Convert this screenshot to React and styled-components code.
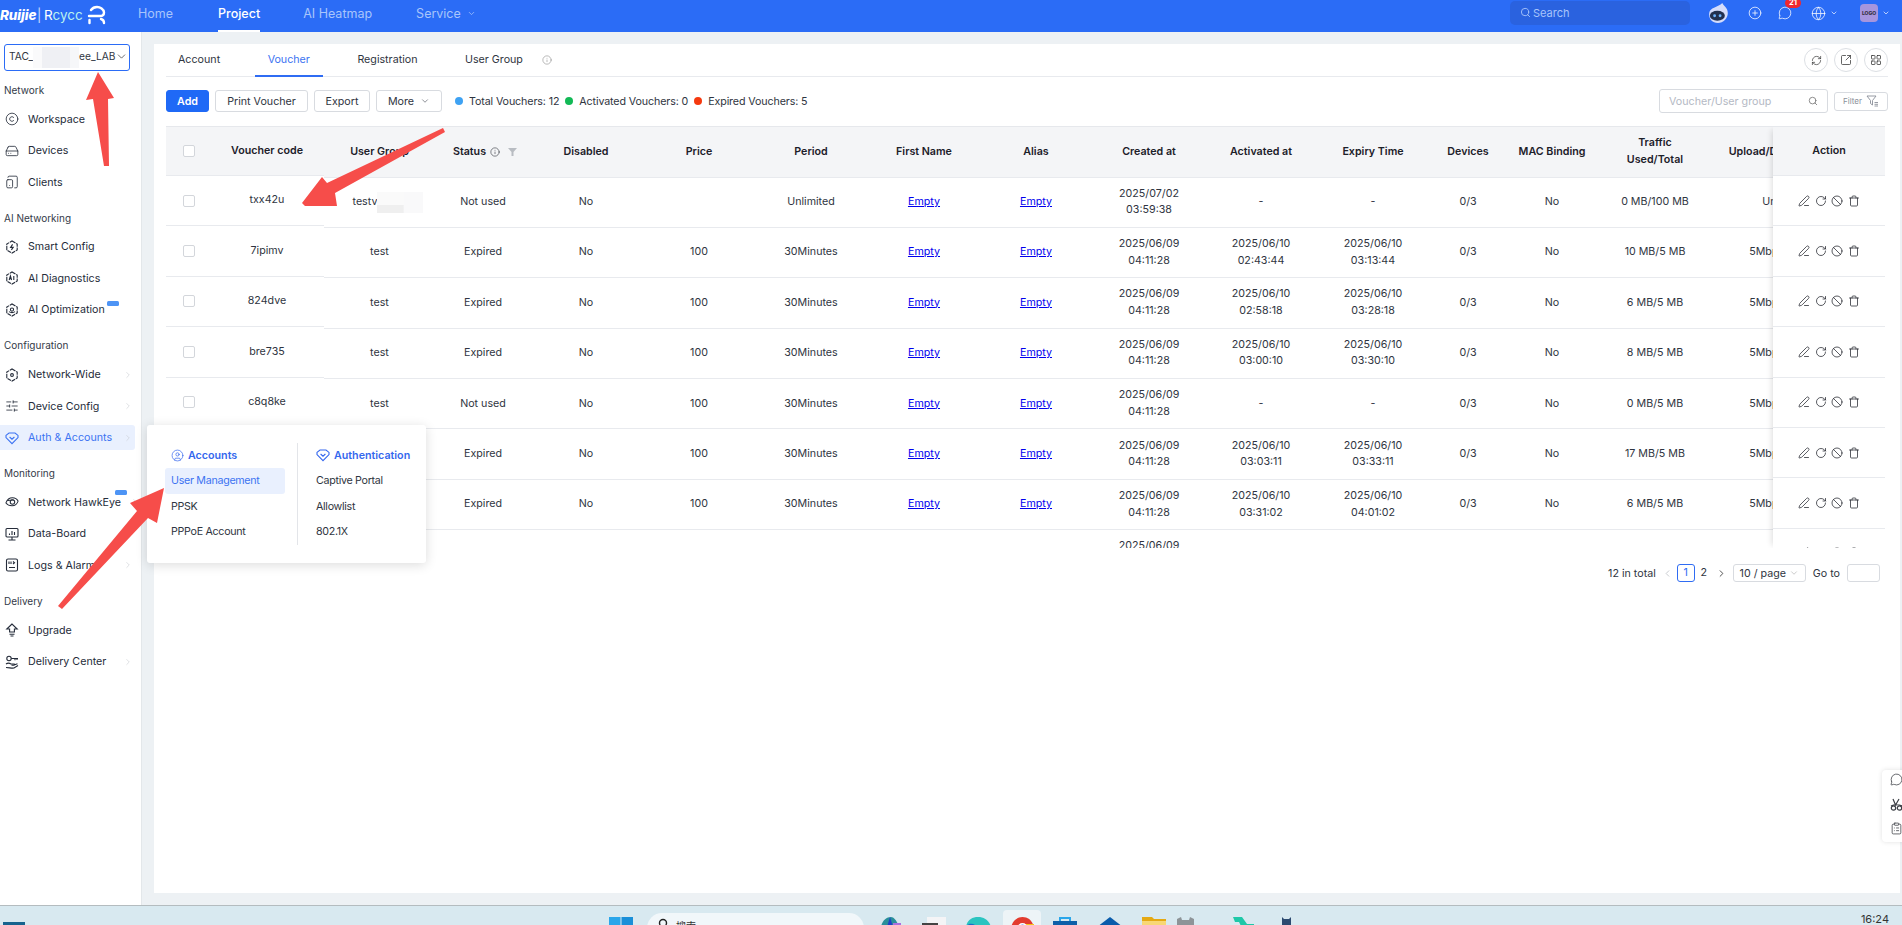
import React from "react";
import styled, { createGlobalStyle } from "styled-components";
import {
  Ban,
  ChevronDown,
  ChevronRight,
  ChevronLeft,
  CirclePlus,
  ClipboardList,
  Copyright,
  Globe,
  HardDrive,
  Info,
  LayoutGrid,
  MessageCircle,
  PenLine,
  RefreshCw,
  RotateCw,
  Search,
  SlidersHorizontal,
  SquareArrowOutUpRight,
  TabletSmartphone,
  Trash,
  CircleUser,
} from "lucide-react";

const blue = "#2b6cf6";
const text = "#2f3541";

const rows = [
  { code: "txx42u", group: "testv", status: "Not used", price: "", period: "Unlimited", created: ["2025/07/02", "03:59:38"], traffic: "0 MB/100 MB", rate: "Unlimited" },
  { code: "7ipimv", group: "test", status: "Expired", price: "100", period: "30Minutes", created: ["2025/06/09", "04:11:28"], activated: ["2025/06/10", "02:43:44"], expiry: ["2025/06/10", "03:13:44"], traffic: "10 MB/5 MB", rate: "5Mbps/5Mbps" },
  { code: "824dve", group: "test", status: "Expired", price: "100", period: "30Minutes", created: ["2025/06/09", "04:11:28"], activated: ["2025/06/10", "02:58:18"], expiry: ["2025/06/10", "03:28:18"], traffic: "6 MB/5 MB", rate: "5Mbps/5Mbps" },
  { code: "bre735", group: "test", status: "Expired", price: "100", period: "30Minutes", created: ["2025/06/09", "04:11:28"], activated: ["2025/06/10", "03:00:10"], expiry: ["2025/06/10", "03:30:10"], traffic: "8 MB/5 MB", rate: "5Mbps/5Mbps" },
  { code: "c8q8ke", group: "test", status: "Not used", price: "100", period: "30Minutes", created: ["2025/06/09", "04:11:28"], traffic: "0 MB/5 MB", rate: "5Mbps/5Mbps" },
  { code: "m3k9xa", group: "test", status: "Expired", price: "100", period: "30Minutes", created: ["2025/06/09", "04:11:28"], activated: ["2025/06/10", "03:03:11"], expiry: ["2025/06/10", "03:33:11"], traffic: "17 MB/5 MB", rate: "5Mbps/5Mbps" },
  { code: "p5t2hw", group: "test", status: "Expired", price: "100", period: "30Minutes", created: ["2025/06/09", "04:11:28"], activated: ["2025/06/10", "03:31:02"], expiry: ["2025/06/10", "04:01:02"], traffic: "6 MB/5 MB", rate: "5Mbps/5Mbps" },
  { code: "q7r4nc", group: "test", status: "Not used", price: "100", period: "30Minutes", created: ["2025/06/09", "04:11:28"], traffic: "0 MB/5 MB", rate: "5Mbps/5Mbps" },
];

const Hex = ({ children }) => (
  <svg width="14" height="14" viewBox="0 0 14 14" fill="none" stroke="currentColor" strokeWidth="1.1">
    <path d="M7 1l5.2 3v6L7 13l-5.2-3V4z" strokeDasharray="4 .8" />
    {children}
  </svg>
);

const HeartShield = () => (
  <svg width="14" height="14" viewBox="0 0 14 14" fill="none" stroke="currentColor" strokeWidth="1.1">
    <path d="M1 4.400L4 2h6l3 2.400V6.600L7 12.600 1 6.600z" />
    <path d="M4.600 6L7 8.200 9.400 6" />
  </svg>
);

const sideGroups = [
  {
    title: "Network",
    items: [
      { label: "Workspace", icon: <Copyright size={14} strokeWidth={1.4} /> },
      { label: "Devices", icon: <HardDrive size={14} strokeWidth={1.4} /> },
      { label: "Clients", icon: <TabletSmartphone size={14} strokeWidth={1.4} /> },
    ],
  },
  {
    title: "AI Networking",
    items: [
      { label: "Smart Config", icon: <Hex><path d="M7.600 4.400L5.600 7.400h2.600L6.400 9.800" /></Hex> },
      { label: "AI Diagnostics", icon: <Hex><path d="M4.200 9l1.200-4 1.200 4M4.700 7.800h1.500M8.800 5v4" /></Hex> },
      { label: "AI Optimization", icon: <Hex><circle cx="7" cy="6.600" r="1.600" /><path d="M4 8.600c2 1.400 4 1.400 6 0" /></Hex>, tag: { top: 3.5, left: 107 } },
    ],
  },
  {
    title: "Configuration",
    items: [
      { label: "Network-Wide", icon: <Hex><circle cx="7" cy="7" r="1.400" /></Hex>, more: true },
      { label: "Device Config", icon: <SlidersHorizontal size={14} strokeWidth={1.4} />, more: true },
      { label: "Auth & Accounts", active: true, more: true, icon: <HeartShield /> },
    ],
  },
  {
    title: "Monitoring",
    items: [
      {
        label: "Network HawkEye",
        tag: { top: 0, left: 115 },
        more: true,
        icon: (
          <svg width="14" height="14" viewBox="0 0 15 14" fill="none" stroke="currentColor" strokeWidth="1.1">
            <path d="M1 8c1.500-4 4-5.500 7-5.500s5 1.500 6 3.500c-1 3-3.500 5-6.500 5S2.500 10 1 8z" />
            <circle cx="8" cy="7" r="2.400" />
            <path d="M2.500 5.500C5 5 7 4.500 9.500 5" />
          </svg>
        ),
      },
      {
        label: "Data-Board",
        icon: (
          <svg width="14" height="14" viewBox="0 0 14 14" fill="none" stroke="currentColor" strokeWidth="1.1">
            <rect x="1" y="1.500" width="12" height="8.500" rx="1" />
            <path d="M7 10v3M3.500 13h7M4.500 8V6.500M7 8V4M9.500 8V5" />
          </svg>
        ),
      },
      {
        label: "Logs & Alarms",
        more: true,
        icon: (
          <svg width="14" height="14" viewBox="0 0 14 14" fill="none" stroke="currentColor" strokeWidth="1.1">
            <rect x="1.500" y="1" width="11" height="12" rx="1.500" />
            <path d="M4 3.500v2.500M6 3.500v2.500M8 3.500l1.500 1.200L8 6M4 9.500h6" />
          </svg>
        ),
      },
    ],
  },
  {
    title: "Delivery",
    items: [
      {
        label: "Upgrade",
        icon: (
          <svg width="14" height="14" viewBox="0 0 14 14" fill="none" stroke="currentColor" strokeWidth="1.1">
            <path d="M7 1L1.800 6h2.800v3h4.800V6h2.800zM4.500 11.200h5M5.500 13h3" />
          </svg>
        ),
      },
      {
        label: "Delivery Center",
        more: true,
        icon: (
          <svg width="14" height="14" viewBox="0 0 14 14" fill="none" stroke="currentColor" strokeWidth="1.1">
            <circle cx="4" cy="3.500" r="2.200" />
            <path d="M6.200 3.500H13M10 3.500v1.800M12 3.500v1.400M1 9c2-1.500 3.500-1 5 0h3c1 0 1 1.200 0 1.200H6.500M9 10l3.500-1.200M1 12.500c3 0 6 1 8 .5l4-2.500" />
          </svg>
        ),
      },
    ],
  },
];

const GlobalStyle = createGlobalStyle`
  html, body {
    margin: 0;
    height: 100%;
    overflow: hidden;
    background: #edf1f4;
    font-family: Inter, "Noto Sans", "Liberation Sans", sans-serif;
    font-size: 10.700px;
    color: ${text};
  }
  * {
    box-sizing: border-box;
  }
`;

const Page = styled.div`
  position: relative;
  width: 1902px;
  height: 925px;
  display: flex;
  flex-direction: column;
  overflow: hidden;
`;

const Header = styled.header`
  height: 32px;
  flex: none;
  background: ${blue};
  display: flex;
  align-items: center;
  color: #fff;
`;

const Logo = styled.div`
  width: 138px;
  flex: none;
  display: flex;
  align-items: center;
  white-space: nowrap;
  margin-bottom: 3px;
`;

const LogoBrand = styled.span`
  font-weight: 800;
  font-style: italic;
  font-size: 13.500px;
  width: 37px;
  letter-spacing: -0.1px;
`;

const LogoPipe = styled.span`
  width: 7px;
  font-size: 13px;
  opacity: 0.75;
`;

const LogoName = styled.span`
  font-size: 13.500px;
  width: 43px;
  color: #b9f1ee;
  &::first-letter {
    color: #fff;
  }
`;

const NavItem = styled.a`
  height: 32px;
  margin-right: ${(p) => p.$gap}px;
  font-size: 12.500px;
  display: flex;
  align-items: center;
  gap: 6px;
  padding-bottom: 4px;
  font-weight: ${(p) => (p.$active ? 500 : 400)};
  color: ${(p) => (p.$active ? "#fff" : "#a8c5fb")};
  border-bottom: 2px solid ${(p) => (p.$active ? "#fff" : "transparent")};
`;

const HeaderSearch = styled.div`
  margin-left: auto;
  width: 180px;
  height: 24px;
  margin-bottom: 7px;
  border-radius: 5px;
  background: #2a62df;
  color: #a8c5fb;
  display: flex;
  align-items: center;
  gap: 2px;
  padding-left: 10px;
  font-size: 11px;
`;

const HeaderIcons = styled.div`
  width: 212px;
  flex: none;
  display: flex;
  align-items: center;
  padding-left: 18px;
  height: 32px;
  margin-bottom: 6px;
`;

const IconSlot = styled.span`
  position: relative;
  display: flex;
  align-items: center;
  margin-left: ${(p) => p.$left || 0}px;
`;

const Badge = styled.span`
  position: absolute;
  left: 7px;
  top: -8px;
  width: 16px;
  height: 10px;
  border-radius: 5px;
  background: #f0272f;
  color: #fff;
  font-size: 7.500px;
  font-weight: 700;
  line-height: 10px;
  text-align: center;
`;

const Avatar = styled.span`
  width: 18px;
  height: 18px;
  border-radius: 4px;
  background: #a695dd;
  color: #33303f;
  font-size: 5px;
  font-weight: 800;
  line-height: 18px;
  text-align: center;
`;

const Main = styled.div`
  flex: 1;
  min-height: 0;
  display: flex;
`;

const Sidebar = styled.aside`
  width: 142px;
  flex: none;
  background: #fff;
  border-right: 1px solid #e3e7ea;
  padding-top: 12px;
  display: flex;
  flex-direction: column;
`;

const SiteSelect = styled.div`
  width: 126px;
  height: 27px;
  margin-left: 4px;
  margin-bottom: 6px;
  flex: none;
  border: 1px solid ${blue};
  border-radius: 3px;
  padding: 0 5px 3px 4px;
  display: flex;
  align-items: center;
  font-size: 10.200px;
  color: ${text};
  white-space: nowrap;
`;

const SiteChevron = styled.span`
  margin-left: auto;
  display: flex;
  color: #333;
`;

const Redacted = styled.span`
  display: inline-block;
  flex: none;
  width: 46px;
  height: 21px;
  margin-bottom: -3px;
  background: linear-gradient(90deg, #fafafb 20%, #eff0f4 20%, #eff0f4 80%, #f6f7f9 80%);
`;

const SoftRedacted = styled(Redacted)`
  margin-bottom: 0;
  background: linear-gradient(#fafafa 62%, #efefef 62%) left / 58% 100% no-repeat, #f9f9fa;
`;

const GroupTitle = styled.div`
  height: 26.500px;
  line-height: 26.500px;
  padding-left: 4px;
  font-size: 10px;
  color: #333a48;
`;

const Group = styled.div`
  display: flex;
  flex-direction: column;
  flex: none;
  margin-bottom: 6.700px;
`;

const SideItem = styled.div`
  position: relative;
  flex: none;
  height: 25px;
  margin: 3.250px 6px 3.250px 0;
  padding-left: 5px;
  padding-right: 2px;
  border-radius: 0 3px 3px 0;
  display: flex;
  align-items: center;
  gap: 9px;
  white-space: nowrap;
  background: ${(p) => (p.$active ? "#e9f0fe" : "transparent")};
  color: ${(p) => (p.$active ? "#3c73f2" : "#252c3a")};
  svg {
    flex: none;
  }
`;

const SideMore = styled.span`
  margin-left: auto;
  display: flex;
  color: #c4c7cc;
`;

const NewTag = styled.span`
  position: absolute;
  top: ${(p) => p.$top}px;
  left: ${(p) => p.$left}px;
  width: 12px;
  height: 5px;
  border-radius: 1.500px;
  background: #4d94f5;
`;

const Content = styled.main`
  flex: 1;
  min-width: 0;
  padding: 12px 2px 12px 12px;
`;

const Card = styled.section`
  height: 100%;
  background: #fff;
  padding: 0 12px;
`;

const TabBar = styled.div`
  height: 33px;
  display: flex;
  align-items: flex-end;
  border-bottom: 1px solid #e8eaee;
`;

const Tab = styled.a`
  height: 33px;
  line-height: 31px;
  padding: 0 13px;
  margin-right: 21.500px;
  margin-bottom: -1px;
  color: ${(p) => (p.$active ? "#3c73f2" : text)};
  border-bottom: 2px solid ${(p) => (p.$active ? "#2f6cf3" : "transparent")};
  &:first-child {
    padding-left: 12px;
  }
`;

const TabInfo = styled.span`
  display: flex;
  align-self: center;
  color: #777;
  margin-left: -15px;
`;

const TabActions = styled.div`
  margin-left: auto;
  display: flex;
  gap: 6px;
  align-self: center;
`;

const RoundButton = styled.button`
  width: 24px;
  height: 24px;
  padding: 0;
  border-radius: 50%;
  border: 1px solid #dcdfe4;
  background: #fff;
  color: #333;
  display: flex;
  align-items: center;
  justify-content: center;
`;

const Toolbar = styled.div`
  height: 24px;
  margin: 12px 0 13px;
  display: flex;
  align-items: center;
  gap: 6px;
`;

const Button = styled.button`
  height: 22px;
  padding: 0;
  width: ${(p) => p.$w}px;
  border-radius: 3px;
  border: 1px solid ${(p) => (p.$primary ? "#1f69f6" : "#d8dbe0")};
  background: ${(p) => (p.$primary ? "#1f69f6" : "#fff")};
  color: ${(p) => (p.$primary ? "#fff" : text)};
  font: inherit;
  font-weight: ${(p) => (p.$primary ? 600 : 400)};
  display: flex;
  align-items: center;
  justify-content: center;
  gap: 6px;
  white-space: nowrap;
`;

const Stats = styled.div`
  display: flex;
  align-items: center;
  margin-left: 7px;
  white-space: nowrap;
  letter-spacing: -0.12px;
`;

const Dot = styled.span`
  width: 8px;
  height: 8px;
  border-radius: 50%;
  background: ${(p) => p.$color};
  margin-right: 6px;
`;

const Stat = styled.span`
  margin-right: 6px;
`;

const SearchBox = styled.div`
  margin-left: auto;
  width: 169px;
  height: 24px;
  border: 1px solid #d8dbe0;
  border-radius: 3px;
  padding: 0 9px;
  display: flex;
  align-items: center;
  justify-content: space-between;
  color: #b4b9c4;
  white-space: nowrap;
`;

const FilterButton = styled.button`
  width: 54px;
  height: 19px;
  padding: 0;
  border-radius: 3px;
  border: 1px solid #d8dbe0;
  background: #fff;
  color: #8a8f99;
  font: inherit;
  font-size: 8px;
  display: flex;
  align-items: center;
  justify-content: center;
  gap: 4px;
`;

const TableWrap = styled.div`
  position: relative;
  height: 422px;
  margin-right: 3px;
  overflow: hidden;
  border-top: 1px solid #e6e8ec;
`;

const columns = "158px 111px 96px 110px 116px 108px 118px 106px 120px 104px 120px 70px 98px 108px 132px";

const MainRow = styled.div`
  display: grid;
  grid-template-columns: ${columns};
  height: ${(p) => (p.$head ? "50.500px" : "50.400px")};
  background: ${(p) => (p.$head ? "#f4f5f7" : "#fff")};
  border-bottom: 1px solid #e8eaee;
`;

const Cell = styled.div`
  display: flex;
  flex-direction: column;
  align-items: center;
  justify-content: center;
  text-align: center;
  line-height: 16.500px;
  white-space: nowrap;
  font-weight: ${(p) => (p.$head ? 600 : 400)};
  color: ${(p) => (p.$head ? "#1c2029" : text)};
`;

const RateCell = styled(Cell)`
  padding-left: 22px;
`;

const StatusHead = styled.span`
  display: flex;
  align-items: center;
  gap: 4px;
  margin-left: 4px;
  svg:last-child {
    margin-left: 4px;
  }
`;

const MaskedName = styled.span`
  display: flex;
  align-items: center;
  margin-left: 17px;
`;

const Link = styled.a`
  color: #0000ee;
  text-decoration: underline;
`;

const Fixed = styled.div`
  position: absolute;
  top: 0;
  bottom: 0;
  width: ${(p) => p.$w}px;
  background: #fff;
  ${(p) => (p.$right ? "right: 0; box-shadow: -4px 0 6px -3px rgba(0,0,0,.14);" : "left: 0;")}
`;

const FixedRow = styled.div`
  display: grid;
  grid-template-columns: ${(p) => p.$cols};
  height: ${(p) => (p.$head ? "49px" : "50.400px")};
  background: ${(p) => (p.$head ? "#f4f5f7" : "#fff")};
  border-bottom: 1px solid #e8eaee;
`;

const Check = styled.span`
  width: 12px;
  height: 12px;
  border: 1px solid #d3d6db;
  border-radius: 2px;
  background: #fff;
`;

const Actions = styled.div`
  display: flex;
  align-items: center;
  justify-content: center;
  gap: 4.500px;
  color: #23262d;
`;

const Pagination = styled.div`
  margin-top: 16px;
  padding-right: 8px;
  height: 18px;
  display: flex;
  align-items: center;
  justify-content: flex-end;
  white-space: nowrap;
`;

const PageCell = styled.span`
  width: 18px;
  height: 18px;
  line-height: 16px;
  text-align: center;
  border-radius: 3px;
  border: 1px solid ${(p) => (p.$active ? "#2f6cf3" : "transparent")};
  color: ${(p) => (p.$active ? "#2f6cf3" : text)};
`;

const PageArrow = styled.span`
  display: flex;
  color: ${(p) => (p.$off ? "#c4c7cc" : "#444")};
  margin: 0 ${(p) => p.$right}px 0 ${(p) => p.$left}px;
`;

const PageSize = styled.span`
  width: 73px;
  height: 18px;
  border: 1px solid #d8dbe0;
  border-radius: 3px;
  display: flex;
  align-items: center;
  justify-content: center;
  gap: 3px;
  margin: 0 7px 0 2px;
`;

const GoTo = styled.span`
  width: 33px;
  height: 18px;
  margin-left: 7px;
  border: 1px solid #d8dbe0;
  border-radius: 3px;
`;

const Taskbar = styled.footer`
  height: 20px;
  flex: none;
  border-top: 1px solid #b4bcbf;
  background: #d8e9f0;
  display: flex;
  overflow: hidden;
  position: relative;
`;

const TaskIcons = styled.div`
  margin-left: 583px;
  display: flex;
  align-items: flex-start;
`;

const TaskIcon = styled.span`
  display: block;
  flex: none;
  margin-top: 11px;
  margin-left: ${(p) => p.$left}px;
  svg {
    display: block;
  }
`;

const ActiveTile = styled.span`
  flex: none;
  margin-top: 4px;
  margin-left: ${(p) => p.$left}px;
  width: 38px;
  height: 20px;
  border-radius: 4px 4px 0 0;
  background: #edf4f7;
  display: flex;
  justify-content: center;
  padding-top: 7px;
`;

const SearchPill = styled.div`
  width: 217px;
  height: 30px;
  margin: 7px 0 0 14px;
  border-radius: 15px;
  background: #f1f7fa;
  display: flex;
  align-items: flex-start;
  padding: 5px 10px 0 11px;
  flex: none;
  font-size: 10px;
  color: #333;
  gap: 8px;
  font-family: "Noto Sans CJK SC", Inter, sans-serif;
`;

const Clock = styled.span`
  position: absolute;
  right: 13px;
  top: 6px;
  font-size: 11px;
  color: #333;
`;

const Popup = styled.div`
  position: absolute;
  left: 147px;
  top: 425px;
  width: 279px;
  height: 138px;
  padding: 18px 0 18px 18px;
  background: #fff;
  border-radius: 3px;
  box-shadow: 0 2px 12px rgba(0, 0, 0, 0.14);
  display: flex;
`;

const PopupCol = styled.div`
  width: 132px;
  padding-right: 12px;
  flex: none;
  &:last-child {
    width: 118px;
    padding: 0 0 0 12px;
    border-left: 1px solid #e3e5e9;
  }
`;

const PopupHead = styled.div`
  height: 25px;
  display: flex;
  align-items: center;
  gap: 4px;
  padding-left: 6px;
  padding-bottom: 1px;
  font-weight: 600;
  color: #3467ee;
`;

const PopupItem = styled.div`
  height: 25.500px;
  line-height: 25.500px;
  padding-left: 6px;
  border-radius: 3px;
  letter-spacing: -0.3px;
  background: ${(p) => (p.$active ? "#e9f0fe" : "transparent")};
  color: ${(p) => (p.$active ? "#3c73f2" : text)};
`;

const Floating = styled.div`
  position: absolute;
  left: 1882px;
  top: 770px;
  width: 30px;
  height: 72px;
  border-radius: 4px;
  background: #fff;
  box-shadow: 0 0 5px rgba(0, 0, 0, 0.12);
  display: flex;
  flex-direction: column;
  align-items: flex-start;
  gap: 11.500px;
  padding: 3px 0 0 8px;
  color: #3a3d44;
`;

const ArrowLayer = styled.svg`
  position: absolute;
  left: 0;
  top: 0;
  pointer-events: none;
`;

const Stack = ({ value }) =>
  value ? (
    <>
      <span>{value[0]}</span>
      <span>{value[1]}</span>
    </>
  ) : (
    "-"
  );

const App = () => (
  <Page>
    <GlobalStyle />
    <Header>
      <Logo>
        <LogoBrand>Ruijie</LogoBrand>
        <LogoPipe>|</LogoPipe>
        <LogoName>Rcycc</LogoName>
        <svg width="19" height="20" viewBox="0 0 19 20" fill="none" stroke="#fff" strokeWidth="2.400" strokeLinecap="round">
          <path d="M2 11h11c3 0 4-1.500 4-3.500C17 4 13 2 10 2 7.500 2 5.500 3 4 5M2.500 18v-3M17 18c0-2-1-3.500-3-4" />
        </svg>
      </Logo>
      <NavItem $gap={45}>Home</NavItem>
      <NavItem $gap={43} $active>Project</NavItem>
      <NavItem $gap={44}>AI Heatmap</NavItem>
      <NavItem $gap={0}>Service <ChevronDown size={9} /></NavItem>
      <HeaderSearch><Search size={11} />Search</HeaderSearch>
      <HeaderIcons>
        <IconSlot>
          <svg width="22" height="22" viewBox="0 0 20 20">
            <path d="M13 1c.5 2 5 4 5 9 0 5-4 9-9 9s-8-3-8-8c0-3 2-5 5-6C8.500 4 11 3 13 1z" fill="#d5dcfb" />
            <ellipse cx="8.500" cy="12.500" rx="6.800" ry="4.500" fill="#23304f" />
            <circle cx="6" cy="12.500" r="1.300" fill="#6fb4ff" />
            <circle cx="11" cy="12.500" r="1.300" fill="#6fb4ff" />
          </svg>
        </IconSlot>
        <IconSlot $left={18}><CirclePlus size={14} strokeWidth={1.3} /></IconSlot>
        <IconSlot $left={16}>
          <MessageCircle size={14} strokeWidth={1.3} />
          <Badge>21</Badge>
        </IconSlot>
        <IconSlot $left={19}><Globe size={15} strokeWidth={1.2} /></IconSlot>
        <IconSlot $left={4}><ChevronDown size={8} strokeWidth={2} /></IconSlot>
        <IconSlot $left={22}><Avatar>LOGO</Avatar></IconSlot>
        <IconSlot $left={4}><ChevronDown size={8} strokeWidth={2} /></IconSlot>
      </HeaderIcons>
    </Header>

    <Main>
      <Sidebar>
        <SiteSelect>
          TAC_<Redacted />ee_LAB
          <SiteChevron><ChevronDown size={13} strokeWidth={1.3} /></SiteChevron>
        </SiteSelect>
        {sideGroups.map((group) => (
          <Group key={group.title}>
            <GroupTitle>{group.title}</GroupTitle>
            {group.items.map((item) => (
              <SideItem key={item.label} $active={item.active}>
                {item.icon}
                {item.label}
                {item.tag && <NewTag $top={item.tag.top} $left={item.tag.left} />}
                {item.more && <SideMore><ChevronRight size={10} strokeWidth={1.3} /></SideMore>}
              </SideItem>
            ))}
          </Group>
        ))}
      </Sidebar>

      <Content>
        <Card>
          <TabBar>
            <Tab>Account</Tab>
            <Tab $active>Voucher</Tab>
            <Tab>Registration</Tab>
            <Tab>User Group</Tab>
            <TabInfo><Info size={10} strokeWidth={1.2} /></TabInfo>
            <TabActions>
              <RoundButton><RefreshCw size={11} strokeWidth={1.5} /></RoundButton>
              <RoundButton><SquareArrowOutUpRight size={12} strokeWidth={1.5} /></RoundButton>
              <RoundButton><LayoutGrid size={12} strokeWidth={1.5} /></RoundButton>
            </TabActions>
          </TabBar>

          <Toolbar>
            <Button $primary $w={43}>Add</Button>
            <Button $w={93}>Print Voucher</Button>
            <Button $w={56}>Export</Button>
            <Button $w={66}>More <ChevronDown size={10} strokeWidth={1.3} /></Button>
            <Stats>
              <Dot $color="#3ea2f3" /><Stat>Total Vouchers: 12</Stat>
              <Dot $color="#12b956" /><Stat>Activated Vouchers: 0</Stat>
              <Dot $color="#f5390f" /><Stat>Expired Vouchers: 5</Stat>
            </Stats>
            <SearchBox>Voucher/User group <Search size={10} color="#777" /></SearchBox>
            <FilterButton>
              Filter
              <svg width="13" height="12" viewBox="0 0 13 12" fill="none" stroke="currentColor" strokeWidth="0.9">
                <path d="M1 1h9L6.500 5.500V10L4.500 8.500V5.500zM8.500 7.500h3.500M8.500 9.300h3.500M8.500 11h3.500" />
              </svg>
            </FilterButton>
          </Toolbar>

          <TableWrap>
            <MainRow $head>
              <div />
              <Cell $head>User Group</Cell>
              <Cell $head>
                <StatusHead>
                  Status <Info size={10} strokeWidth={1.3} />
                  <svg width="9" height="8" viewBox="0 0 9 8" fill="#b8bcc2"><path d="M0 0h9L5.500 4v4h-2V4z" /></svg>
                </StatusHead>
              </Cell>
              <Cell $head>Disabled</Cell>
              <Cell $head>Price</Cell>
              <Cell $head>Period</Cell>
              <Cell $head>First Name</Cell>
              <Cell $head>Alias</Cell>
              <Cell $head>Created at</Cell>
              <Cell $head>Activated at</Cell>
              <Cell $head>Expiry Time</Cell>
              <Cell $head>Devices</Cell>
              <Cell $head>MAC Binding</Cell>
              <Cell $head><span>Traffic</span><span>Used/Total</span></Cell>
              <Cell $head>Upload/Download</Cell>
            </MainRow>
            {rows.map((row) => (
              <MainRow key={row.code}>
                <div />
                <Cell>
                  {row.group === "testv" ? (
                    <MaskedName>testv<SoftRedacted /></MaskedName>
                  ) : (
                    row.group
                  )}
                </Cell>
                <Cell>{row.status}</Cell>
                <Cell>No</Cell>
                <Cell>{row.price}</Cell>
                <Cell>{row.period}</Cell>
                <Cell><Link>Empty</Link></Cell>
                <Cell><Link>Empty</Link></Cell>
                <Cell><Stack value={row.created} /></Cell>
                <Cell><Stack value={row.activated} /></Cell>
                <Cell><Stack value={row.expiry} /></Cell>
                <Cell>0/3</Cell>
                <Cell>No</Cell>
                <Cell>{row.traffic}</Cell>
                <RateCell>{row.rate}</RateCell>
              </MainRow>
            ))}

            <Fixed $w={158}>
              <FixedRow $head $cols="46px 110px">
                <Cell><Check /></Cell>
                <Cell $head>Voucher code</Cell>
              </FixedRow>
              {rows.map((row) => (
                <FixedRow key={row.code} $cols="46px 110px">
                  <Cell><Check /></Cell>
                  <Cell>{row.code}</Cell>
                </FixedRow>
              ))}
            </Fixed>

            <Fixed $right $w={112}>
              <FixedRow $head $cols="1fr">
                <Cell $head>Action</Cell>
              </FixedRow>
              {rows.map((row) => (
                <FixedRow key={row.code} $cols="1fr">
                  <Actions>
                    <PenLine size={12} strokeWidth={1.5} />
                    <RotateCw size={12} strokeWidth={1.5} />
                    <Ban size={12} strokeWidth={1.5} />
                    <Trash size={12} strokeWidth={1.5} />
                  </Actions>
                </FixedRow>
              ))}
            </Fixed>
          </TableWrap>

          <Pagination>
            12 in total
            <PageArrow $off $left={6} $right={4}><ChevronLeft size={11} /></PageArrow>
            <PageCell $active>1</PageCell>
            <PageCell>2</PageCell>
            <PageArrow $left={3} $right={4}><ChevronRight size={11} /></PageArrow>
            <PageSize>10 / page <ChevronDown size={10} strokeWidth={1.2} color="#999" /></PageSize>
            Go to
            <GoTo />
          </Pagination>
        </Card>
      </Content>
    </Main>

    <Taskbar>
      <TaskIcon $left={2}>
        <svg width="24" height="20" viewBox="0 0 24 20"><rect x="1" y="5" width="22" height="15" fill="#17638e" /><rect x="4" y="8" width="7" height="12" fill="#fff" /><rect x="13" y="8" width="7" height="12" fill="#fff" /></svg>
      </TaskIcon>
      <TaskIcons>
        <TaskIcon $left={0}>
          <svg width="24" height="12" viewBox="0 0 24 12"><rect width="11.500" height="12" fill="#2aa6ea" /><rect x="12.500" width="11.500" height="12" fill="#1a8fd8" /></svg>
        </TaskIcon>
        <SearchPill>
          <svg width="10" height="12" viewBox="0 0 10 12" fill="none" stroke="#222" strokeWidth="1.400"><circle cx="5" cy="5" r="3.500" /></svg>
          搜索
        </SearchPill>
        <TaskIcon $left={16}>
          <svg width="22" height="10" viewBox="0 0 22 10"><path d="M1 10c1-6 5-10 10-10 3 0 6 4 8 10z" fill="#2a8f9a" /><path d="M10 0l3 10H7z" fill="#2040c8" /><path d="M13 6h8v4h-8z" fill="#a86fe0" /></svg>
        </TaskIcon>
        <TaskIcon $left={20}>
          <svg width="24" height="10" viewBox="0 0 24 10"><rect x="5" width="19" height="10" fill="#f4f4f6" /><rect y="6" width="16" height="4" fill="#444" /></svg>
        </TaskIcon>
        <TaskIcon $left={20}>
          <svg width="25" height="10" viewBox="0 0 25 10"><path d="M0 10C1 3 6 0 12 0s11 3 13 10z" fill="#2ac4c0" /><path d="M0 10c2-4 6-4 9-2l1 2z" fill="#1a6fc8" /></svg>
        </TaskIcon>
        <ActiveTile $left={12}>
          <svg width="23" height="13" viewBox="0 0 23 13"><path d="M0 13C0 5 5 0 11.500 0S23 5 23 13z" fill="#e33b2e" /><path d="M11.500 7H23v6H15z" fill="#f5c518" /><circle cx="11.500" cy="11" r="5" fill="#fff" /><circle cx="11.500" cy="11" r="3.400" fill="#3a7cee" /></svg>
        </ActiveTile>
        <TaskIcon $left={12}>
          <svg width="24" height="12" viewBox="0 0 24 12"><rect y="4" width="24" height="8" fill="#0d5fa8" /><path d="M7 4V1h10v3" fill="none" stroke="#2aa6ea" strokeWidth="2" /></svg>
        </TaskIcon>
        <TaskIcon $left={20}>
          <svg width="26" height="10" viewBox="0 0 26 10"><path d="M13 0l13 10H0z" fill="#0a5cab" /></svg>
        </TaskIcon>
        <TaskIcon $left={19}>
          <svg width="24" height="11" viewBox="0 0 24 11"><path d="M0 0h10l2 2h12v9H0z" fill="#e5a913" /><rect y="4" width="24" height="7" fill="#f8d775" /></svg>
        </TaskIcon>
        <TaskIcon $left={11}>
          <svg width="17" height="11" viewBox="0 0 17 11"><path d="M0 11V2l4-2 1 3h7l1-3 4 2v9z" fill="#8e9498" /></svg>
        </TaskIcon>
        <TaskIcon $left={39}>
          <svg width="21" height="11" viewBox="0 0 21 11"><path d="M0 0h9l5 7h7v4H9L6 5H2z" fill="#1ec8a8" /></svg>
        </TaskIcon>
        <TaskIcon $left={27}>
          <svg width="11" height="10" viewBox="0 0 11 10"><path d="M1 0l2 2h5l2-2v10H1z" fill="#2c4a70" /></svg>
        </TaskIcon>
      </TaskIcons>
      <Clock>16:24</Clock>
    </Taskbar>

    <Popup>
      <PopupCol>
        <PopupHead><CircleUser size={13} strokeWidth={1.3} />Accounts</PopupHead>
        <PopupItem $active>User Management</PopupItem>
        <PopupItem>PPSK</PopupItem>
        <PopupItem>PPPoE Account</PopupItem>
      </PopupCol>
      <PopupCol>
        <PopupHead><HeartShield />Authentication</PopupHead>
        <PopupItem>Captive Portal</PopupItem>
        <PopupItem>Allowlist</PopupItem>
        <PopupItem>802.1X</PopupItem>
      </PopupCol>
    </Popup>

    <Floating>
      <MessageCircle size={13} strokeWidth={1.4} />
      <svg width="13" height="13" viewBox="0 0 13 13" fill="none" stroke="currentColor" strokeWidth="1.2">
        <path d="M3 1l3 7M9 1L5 8M1 8c3-1.500 8-1.500 11 0" />
        <circle cx="3.500" cy="10" r="2.200" />
        <circle cx="9.500" cy="10" r="2.200" />
      </svg>
      <ClipboardList size={13} strokeWidth={1.4} />
    </Floating>

    <ArrowLayer width="1902" height="925" viewBox="0 0 1902 925" fill="#f64d4a">
      <path d="M98 72L86 100 93 99 104 166 109 166 108 99 114 98z" />
      <path d="M443 128L327 183 322 177 302 203 305 206 337 206 335 193 445 132z" />
      <path d="M164 488L130 503 137 511 58 606 62 609 148 518 157 523z" />
    </ArrowLayer>
  </Page>
);

export default App;
